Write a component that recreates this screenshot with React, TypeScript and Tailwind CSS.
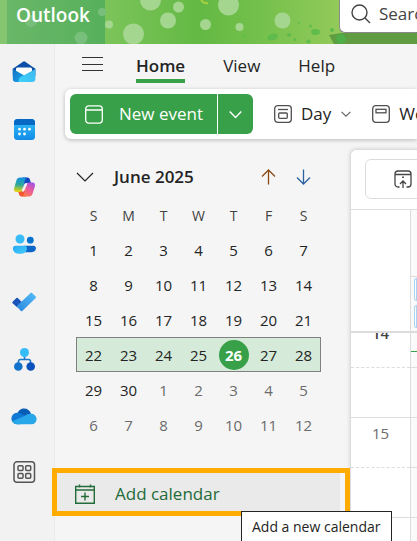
import { useState } from 'react';
import clsx from 'clsx';

const weekDays = ['S', 'M', 'T', 'W', 'T', 'F', 'S'];

const weeks = [
  [1, 2, 3, 4, 5, 6, 7],
  [8, 9, 10, 11, 12, 13, 14],
  [15, 16, 17, 18, 19, 20, 21],
  [22, 23, 24, 25, 26, 27, 28],
  [29, 30, 1, 2, 3, 4, 5],
  [6, 7, 8, 9, 10, 11, 12],
];

const CURRENT_WEEK = 3;
const TODAY = 26;

function MailIcon() {
  return (
    <svg width="24" height="24" viewBox="0 1.5 24 24">
      <defs>
        <linearGradient id="mailBody" x1="0" y1="0" x2="1" y2="1">
          <stop offset="0" stopColor="#1272c4" />
          <stop offset="1" stopColor="#1aa5ea" />
        </linearGradient>
        <linearGradient id="mailFlap" x1="0" y1="1" x2="1" y2="0">
          <stop offset="0" stopColor="#3fd3fb" />
          <stop offset="1" stopColor="#3db4ee" />
        </linearGradient>
      </defs>
      <path d="M.8 9.200 11 2.200a2 2 0 0 1 2.200 0L23.400 9.200v7H.8z" fill="#0b4fa8" />
      <path d="M4 9.500A1.500 1.500 0 0 1 5.500 8h13A1.500 1.500 0 0 1 20 9.500V14l-8 4-8-4z" fill="#fff" />
      <path d="M.8 9.400 12 15.800 7 22.500H4a3.200 3.200 0 0 1-3.200-3.200z" fill="url(#mailBody)" />
      <path d="M23.400 9.400v9.900a3.200 3.200 0 0 1-3.200 3.200H6.500c.3-4 1.600-5.200 4.500-6.200z" fill="url(#mailFlap)" />
    </svg>
  );
}

function CalendarAppIcon() {
  return (
    <svg width="24" height="24" viewBox="0 1 24 24">
      <defs>
        <linearGradient id="calBody" x1="0" y1="0" x2="0" y2="1">
          <stop offset="0" stopColor="#36c0fb" />
          <stop offset="1" stopColor="#118ce6" />
        </linearGradient>
      </defs>
      <rect x="2" y="2" width="21" height="21" rx="3.500" fill="url(#calBody)" />
      <path d="M2 8V5.500A3.500 3.500 0 0 1 5.500 2h14A3.500 3.500 0 0 1 23 5.500V8z" fill="#0669c4" />
      <g fill="#fff">
        <circle cx="7.500" cy="12.200" r="1.400" />
        <circle cx="12.500" cy="12.200" r="1.400" />
        <circle cx="17.500" cy="12.200" r="1.400" />
        <circle cx="7.500" cy="17" r="1.400" />
        <circle cx="12.500" cy="17" r="1.400" />
      </g>
    </svg>
  );
}

function CopilotIcon() {
  return (
    <svg width="24" height="24" viewBox="0 0 24 24">
      <defs>
        <linearGradient id="copilotLeft" x1="0.400" y1="0" x2="0.300" y2="1">
          <stop offset="0" stopColor="#1391e3" />
          <stop offset="0.500" stopColor="#2fa99a" />
          <stop offset="0.800" stopColor="#a5c83a" />
          <stop offset="1" stopColor="#f5d210" />
        </linearGradient>
        <linearGradient id="copilotRight" x1="0.800" y1="0" x2="0.300" y2="1">
          <stop offset="0" stopColor="#a052e8" />
          <stop offset="0.500" stopColor="#ec5a9c" />
          <stop offset="1" stopColor="#fb7b4c" />
        </linearGradient>
      </defs>
      <path d="M11 2.500h4.500c1.300 0 2 .8 2.400 2L19 8h-4c-1.500 0-2 .8-2.400 2l-1 4z" fill="#1447c0" />
      <path d="M14 21.500H9.500c-1.300 0-2-.8-2.400-2L6 16h4c1.500 0 2-.8 2.400-2l1-4z" fill="#f4572f" />
      <path d="M8.500 2.500h6.700c-1.400.3-1.900 1.600-2.300 3l-2.400 8.200C10 15.500 9.500 17 7.500 17H4.600C2 17 1.600 14.800 2.300 12.500l2-6.800C5 3.500 6 2.500 8.500 2.500z" fill="url(#copilotLeft)" />
      <path d="M16.500 21.500H9.800c1.400-.3 1.900-1.600 2.300-3l2.400-8.200C15 8.500 15.500 7.500 17.500 7.500h2.900c2.600 0 3 2.200 2.300 4.500l-2 6.300c-.7 2.200-1.700 3.200-4.200 3.200z" fill="url(#copilotRight)" />
      <path d="M12.600 8.500h2.600L12 16.500H9.600z" fill="#f6f1f4" />
    </svg>
  );
}

function PeopleIcon() {
  return (
    <svg width="24" height="24" viewBox="0 0 24 24">
      <defs>
        <linearGradient id="peopleFront" x1="0" y1="0" x2="1" y2="1">
          <stop offset="0" stopColor="#28a9f0" />
          <stop offset="1" stopColor="#45cdfd" />
        </linearGradient>
      </defs>
      <circle cx="18.300" cy="8.200" r="3.400" fill="#0872cf" />
      <path d="M12 13.800h9.400a2.500 2.500 0 0 1 2.500 2.500c0 2.600-2.300 4-5.600 4H12z" fill="#0b66c8" />
      <circle cx="8" cy="7" r="4.500" fill="#36bdf8" />
      <path d="M3.500 13.800h8.800a2.600 2.600 0 0 1 2.600 2.600c0 3.600-3 5.400-7 5.400s-7-1.800-7-5.400a2.600 2.600 0 0 1 2.600-2.600z" fill="url(#peopleFront)" />
    </svg>
  );
}

function TodoIcon() {
  return (
    <svg width="26" height="24" viewBox="0 0 26 24">
      <defs>
        <linearGradient id="todoArm" x1="0" y1="1" x2="1" y2="0">
          <stop offset="0" stopColor="#2a86de" />
          <stop offset="1" stopColor="#54bdf8" />
        </linearGradient>
      </defs>
      <path d="M1.600 12.800 5.400 9a1 1 0 0 1 1.400 0l4.200 4.200-4.600 5.400-4.800-4.400a1 1 0 0 1 0-1.400z" fill="#1a54b8" />
      <path d="m5.600 17.200 14-13.300a1 1 0 0 1 1.400 0l3.700 3.600a1 1 0 0 1 0 1.400L11.300 22a1 1 0 0 1-1.400 0z" fill="url(#todoArm)" />
    </svg>
  );
}

function OrgIcon() {
  return (
    <svg width="24" height="26" viewBox="0 -1.5 24 26">
      <path d="M12.500 8v5M6.500 18v-3c0-1.300.7-2 2-2h8c1.300 0 2 .7 2 2v3" fill="none" stroke="#1a7bc8" strokeWidth="1.600" />
      <circle cx="12.500" cy="6" r="4.500" fill="#36bdf8" />
      <circle cx="6.300" cy="20" r="4.300" fill="#1273cc" />
      <circle cx="18.700" cy="20" r="4.300" fill="#0c52bd" />
    </svg>
  );
}

function CloudIcon() {
  return (
    <svg width="26" height="20" viewBox="0 -2 26 20">
      <path d="M6 8c.6-4 3.500-6.600 7-6.600 3.300 0 6 2 7 5.400l-5 6z" fill="#0a5db4" />
      <path d="M6 5.800c2-.2 3.600.5 5.200 1.500l6 3.700-8 6.300H6.300a5.700 5.700 0 0 1-.3-11.500z" fill="#0f78d4" />
      <path d="M20.200 6.800a5.200 5.200 0 0 1 .3 10.500H6.300c-2.200 0-4-1-5-3L13.500 9c2-1.400 4-2.300 6.700-2.200z" fill="#28a8ea" />
    </svg>
  );
}

function AppsIcon() {
  return (
    <svg width="24" height="24" viewBox="0 0 24 24" fill="none" stroke="#555" strokeWidth="1.500">
      <rect x="2" y="1.800" width="20.500" height="20.500" rx="3" />
      <rect x="6" y="5.800" width="5" height="4.700" rx="1" />
      <rect x="13.700" y="5.800" width="5" height="4.700" rx="1" />
      <rect x="6" y="13.600" width="5" height="4.700" rx="1" />
      <rect x="13.700" y="13.600" width="5" height="4.700" rx="1" />
    </svg>
  );
}

const apps = [
  { label: 'Mail', icon: <MailIcon /> },
  { label: 'Calendar', icon: <CalendarAppIcon /> },
  { label: 'Copilot', icon: <CopilotIcon /> },
  { label: 'People', icon: <PeopleIcon /> },
  { label: 'To Do', icon: <TodoIcon /> },
  { label: 'Org Explorer', icon: <OrgIcon /> },
  { label: 'OneDrive', icon: <CloudIcon /> },
  { label: 'More apps', icon: <AppsIcon /> },
];

function HeaderArt() {
  return (
    <svg className="absolute inset-0 h-full w-full" viewBox="0 0 417 44" preserveAspectRatio="xMinYMin slice">
      <defs>
        <linearGradient id="headerBg" x1="0" y1="0" x2="1" y2="0">
          <stop offset="0.250" stopColor="#7cc45a" />
          <stop offset="0.480" stopColor="#63b944" />
          <stop offset="0.620" stopColor="#74c04c" />
          <stop offset="0.850" stopColor="#98cc5c" />
          <stop offset="1" stopColor="#8cc254" />
        </linearGradient>
        <linearGradient id="headerLeft" x1="0" y1="0" x2="1" y2="0">
          <stop offset="0" stopColor="#69b768" />
          <stop offset="1" stopColor="#57b05c" />
        </linearGradient>
      </defs>
      <rect width="417" height="44" fill="url(#headerBg)" />
      <rect width="7" height="44" fill="#86c671" />
      <rect x="7" width="98" height="44" fill="url(#headerLeft)" />
      <g fill="#79bf7c">
        <circle cx="31" cy="21" r="6" />
        <circle cx="81" cy="38" r="6.500" />
        <circle cx="102" cy="12" r="4" />
      </g>
      <g fill="#a5d690">
        <circle cx="109" cy="24.500" r="4" />
        <circle cx="133.500" cy="34" r="10.500" />
        <circle cx="150.500" cy="0" r="10.500" />
        <circle cx="168" cy="20.500" r="8" />
        <circle cx="178.500" cy="7" r="5.500" />
        <circle cx="205.500" cy="24.500" r="5.500" />
        <circle cx="228.500" cy="5" r="10.500" />
        <circle cx="239.500" cy="27" r="4" />
        <circle cx="282.500" cy="20.500" r="8" />
      </g>
      <path d="M201 0q3 4 7 3" stroke="#a9cf42" strokeWidth="2" fill="none" />
      <g fill="#5fbb4c">
        <ellipse cx="272.500" cy="37" rx="5.500" ry="3.200" transform="rotate(-15 272.500 37)" />
        <ellipse cx="315.500" cy="32" rx="4.500" ry="3" />
        <circle cx="289" cy="35" r="2" />
        <circle cx="295" cy="39.500" r="1.500" />
        <circle cx="308.500" cy="41.500" r="2" />
        <circle cx="310.500" cy="26" r="1.500" />
        <circle cx="332" cy="30" r="2" />
        <circle cx="299" cy="23" r="1" />
        <circle cx="244.500" cy="36" r="1.200" />
      </g>
      <path d="M329 35l12-2h76v11h-83z" fill="#5f9c42" />
      <circle cx="341" cy="39" r="5" fill="#4fae47" />
    </svg>
  );
}

function Chevron({ size, className }: { size: number; className?: string }) {
  return (
    <svg className={className} width={size} height={size} viewBox="0 0 18 18" fill="none" stroke="currentColor" strokeWidth={size > 14 ? 1.2 : 2}>
      <path d="m1 5 8 8 8-8" />
    </svg>
  );
}

function Header() {
  return (
    <header className="relative flex h-11 shrink-0 items-start overflow-hidden">
      <HeaderArt />
      <h1 className="relative w-[339px] shrink-0 pl-4 text-[19px] leading-[30px] font-semibold text-white">Outlook</h1>
      <label className="relative flex h-[33px] min-w-0 flex-1 items-center gap-2 rounded-bl-md border-b border-l border-[#8a8a8a] bg-white pb-1 pl-[11px]">
        <svg className="shrink-0" width="20" height="20" viewBox="0 0 20 20" fill="none" stroke="#444" strokeWidth="1.400">
          <circle cx="8.500" cy="8.500" r="7.500" />
          <path d="m14 14 5 5" />
        </svg>
        <input
          type="text"
          aria-label="Search"
          placeholder="Search"
          className="w-20 shrink-0 bg-transparent text-[17px] leading-6 text-[#444] outline-none placeholder:text-[#444]"
        />
      </label>
    </header>
  );
}

function Toolbar() {
  return (
    <div className="ml-2.5 flex h-[50px] shrink-0 items-center rounded-l-md bg-white pl-[5px] shadow-[0_1px_4px_rgba(0,0,0,0.25)]">
      <div className="flex h-10 shrink-0 overflow-hidden rounded-md bg-[#38a048] text-white">
        <button className="flex w-[147px] items-center gap-4 pl-[15px] text-[17px]">
          <svg width="18" height="19" viewBox="0 0 18 19" fill="none" stroke="currentColor" strokeWidth="1.300">
            <rect x=".7" y=".9" width="16.600" height="17.200" rx="3" />
            <path d="M1 5h16" />
          </svg>
          New event
        </button>
        <button aria-label="More new items" className="flex w-9 items-center justify-center border-l border-white">
          <Chevron size={13} />
        </button>
      </div>
      <button className="ml-5 flex shrink-0 items-center text-[17px] text-[#242424]">
        <svg width="20" height="20" viewBox="0 0 20 20" fill="none" stroke="#505050" strokeWidth="1.300">
          <rect x="1.700" y="1.700" width="16.600" height="16.600" rx="3" />
          <path d="M5 5.500h10" />
          <rect x="5.700" y="9" width="8.600" height="5.300" rx="1" />
        </svg>
        <span className="ml-2">Day</span>
        <Chevron size={10} className="ml-2.5 text-[#606060]" />
      </button>
      <button className="ml-5 flex shrink-0 items-center gap-2 text-[17px] text-[#242424]">
        <svg width="20" height="20" viewBox="0 0 20 20" fill="none" stroke="#505050" strokeWidth="1.300">
          <rect x="1.700" y="1.700" width="16.600" height="16.600" rx="3" />
          <rect x="5" y="5.300" width="10" height="3.500" />
        </svg>
        Work week
      </button>
    </div>
  );
}

function MiniCalendar() {
  const [selected, setSelected] = useState(TODAY);
  return (
    <div className="pr-[29px] pl-[21px]">
      <div className="flex h-[42px] items-center text-[#242424]">
        <button className="flex flex-1 items-center gap-5 text-[17px] font-semibold">
          <Chevron size={18} />
          June 2025
        </button>
        <button aria-label="Previous month" className="flex w-[35px] justify-center text-[#8c4a14]">
          <svg width="15" height="16" viewBox="0 0 15 16" fill="none" stroke="currentColor" strokeWidth="1.300">
            <path d="M7.500 15.500V1M1 7.500 7.500 1 14 7.500" />
          </svg>
        </button>
        <button aria-label="Next month" className="flex w-[35px] justify-center text-[#2a62a0]">
          <svg width="15" height="16" viewBox="0 0 15 16" fill="none" stroke="currentColor" strokeWidth="1.300">
            <path d="M7.500.5V15M1 8.500 7.500 15 14 8.500" />
          </svg>
        </button>
      </div>
      <table className="w-full table-fixed text-center text-[15px] text-[#242424]">
        <thead>
          <tr className="h-[34px] text-[#424242]">
            {weekDays.map((day, i) => (
              <th key={i} className="p-0 text-[14px] font-normal">{day}</th>
            ))}
          </tr>
        </thead>
        <tbody>
          {weeks.map((week, row) => (
            <tr
              key={row}
              className={clsx('h-[35px]', row === CURRENT_WEEK && 'bg-[#d5ead8] outline-1 -outline-offset-1 outline-[#808080]')}
            >
              {week.map((day) => {
                const other = (row === 4 && day < 20) || row === 5;
                const active = !other && day === selected;
                return (
                  <td key={day} className="p-0">
                    <button
                      onClick={() => !other && setSelected(day)}
                      className={clsx(
                        'mx-auto block h-[30px] w-[30px] rounded-full leading-[30px]',
                        other && 'text-[#6b6b6b]',
                        active && 'bg-[#38a048] font-bold text-white',
                      )}
                    >
                      {day}
                    </button>
                  </td>
                );
              })}
            </tr>
          ))}
        </tbody>
      </table>
    </div>
  );
}

function AddCalendar() {
  return (
    <div className="relative mt-[26px] -ml-[3px] border-5 border-[#ffab00]">
      <button className="flex h-[38px] w-[283px] items-center gap-5 bg-[#eaeaea] pt-1 pl-[18px] text-[17px] text-[#236b38]">
        <svg width="20" height="20" viewBox="0 0 20 20" fill="none" stroke="currentColor" strokeWidth="1.400">
          <path d="M.7 2.500h18.600v16.800H.7zM.7 6h18.600M4.500.5v3M15.500.5v3M10 8.500v8M6 12.500h8" />
        </svg>
        Add calendar
      </button>
      <div
        role="tooltip"
        className="absolute top-[38px] left-[184px] z-10 border border-[#242424] bg-white px-2.5 text-[14px] leading-[30px] whitespace-nowrap text-[#242424]"
      >
        Add a new calendar
      </div>
    </div>
  );
}

function DayView() {
  return (
    <section className="mt-2.5 flex min-w-0 flex-1 flex-col overflow-hidden rounded-tl-md border-t border-l border-[#dcdcdc] bg-white shadow-[0_0_4px_rgba(0,0,0,0.15)]">
      <div className="h-[60px] shrink-0 border-b border-[#dcdcdc] pt-[9px] pl-3.5">
        <button aria-label="Go to today" className="flex h-10 w-32 items-center rounded-md border border-[#dcdcdc] pl-7">
          <svg width="18" height="18" viewBox="0 0 18 18" fill="none" stroke="#444" strokeWidth="1.300">
            <path d="M5.500 17H4a3 3 0 0 1-3-3V4a3 3 0 0 1 3-3h10a3 3 0 0 1 3 3v10a3 3 0 0 1-3 3h-1.500M1 4.500h16M9 18v-6.500M6 14l3-3 3 3" />
            <path d="M9 6.500v1.500" strokeWidth="1.800" />
          </svg>
        </button>
      </div>
      <div className="flex h-[121px] shrink-0">
        <div className="w-[59px] shrink-0" />
        <div className="flex min-w-0 flex-1 flex-col border-l border-[#dcdcdc] bg-[#fafafa]">
          <div className="h-[67px] border-b border-[#dcdcdc]" />
          <div className="flex flex-col gap-1 pt-px pl-[3px]">
            <div className="h-[23px] rounded-l-md border border-[#a9d3f2] bg-white" />
            <div className="h-[23px] rounded-l-md border border-[#a9d3f2] bg-white" />
          </div>
        </div>
      </div>
      <div className="flex flex-1 overflow-hidden border-t-2 border-[#dcdcdc] text-[15px]">
        <div className="w-[59px] shrink-0 text-center text-[#6b6b6b]">
          <div className="flow-root h-[35px] border-b border-dashed border-[#dcdcdc]">
            <div className="-mt-[11px] leading-[22px] font-semibold text-[#424242]">14</div>
          </div>
          <div className="h-[50px] border-b border-[#dcdcdc]" />
          <div className="h-[50px] border-b border-dashed border-[#dcdcdc] pt-1 leading-[22px]">15</div>
          <div className="h-[50px] border-b border-[#dcdcdc]" />
        </div>
        <div className="min-w-0 flex-1 border-l border-[#dcdcdc] bg-[#fafafa]">
          <div className="h-[19px] border-b border-dashed border-[#38a048]" />
          <div className="h-4 border-b border-dashed border-[#dcdcdc]" />
          <div className="h-[50px] border-b border-[#dcdcdc]" />
          <div className="h-[50px] border-b border-dashed border-[#dcdcdc]" />
          <div className="h-[50px] border-b border-[#dcdcdc]" />
        </div>
      </div>
    </section>
  );
}

export default function App() {
  return (
    <div className="flex h-screen flex-col overflow-hidden bg-[#f5f5f5] font-['Segoe_UI','Open_Sans',sans-serif]">
      <Header />
      <div className="flex min-h-0 flex-1">
        <nav className="flex w-[55px] shrink-0 flex-col border-r border-[#ebebeb] bg-[#f2f2f2] pr-1.5">
          {apps.map((app) => (
            <a key={app.label} href="#" aria-label={app.label} className="flex h-[57px] shrink-0 items-center justify-center">
              {app.icon}
            </a>
          ))}
        </nav>
        <main className="flex min-w-0 flex-1 flex-col">
          <div className="flex h-[45px] shrink-0 items-start pt-2 pl-[27px] text-[17px] leading-[27px] text-[#242424]">
            <button aria-label="Menu" className="flex h-6 w-[54px] items-center">
              <svg width="21" height="16" viewBox="0 0 21 16" stroke="#333" strokeWidth="1.200">
                <path d="M0 1.500h21M0 8.500h21M0 14.500h21" />
              </svg>
            </button>
            <button className="border-b-4 border-[#38a048] font-semibold">Home</button>
            <button className="ml-[38px]">View</button>
            <button className="ml-[38px]">Help</button>
          </div>
          <Toolbar />
          <div className="flex min-h-0 flex-1">
            <div className="w-[295px] shrink-0 pt-[17px]">
              <MiniCalendar />
              <AddCalendar />
            </div>
            <DayView />
          </div>
        </main>
      </div>
    </div>
  );
}
